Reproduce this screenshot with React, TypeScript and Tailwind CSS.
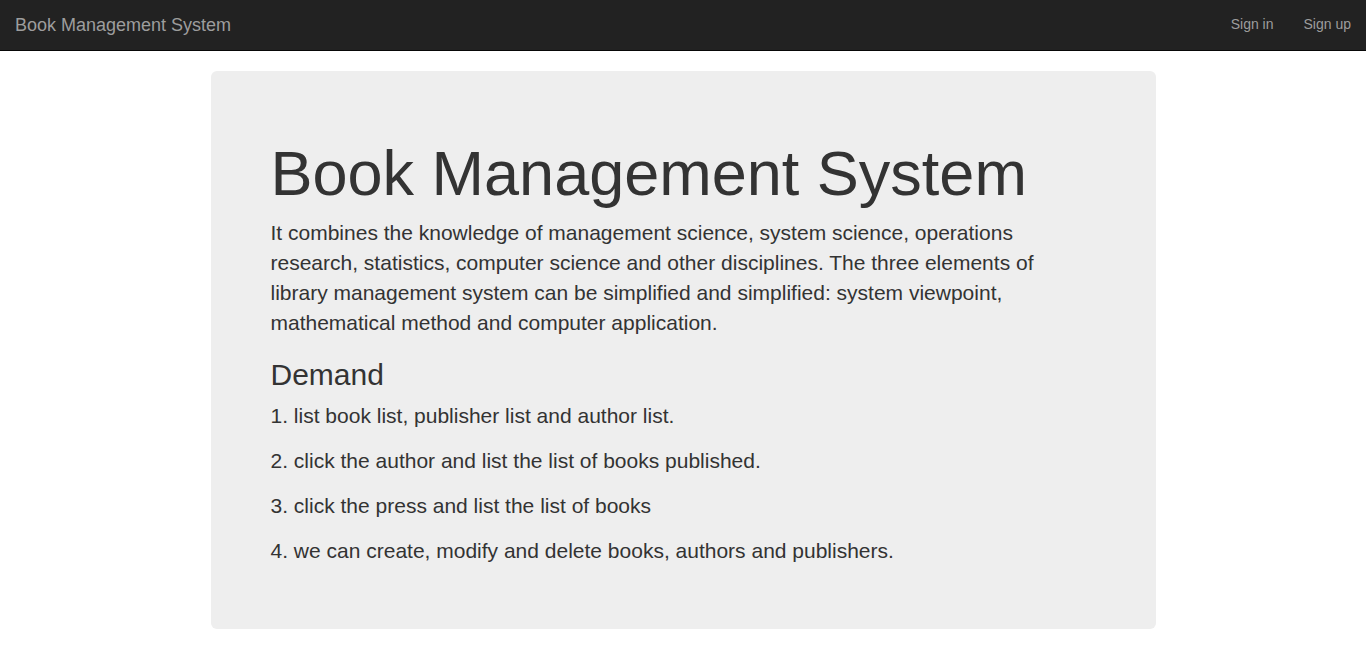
export default function App() {
  const demands = [
    "1. list book list, publisher list and author list.",
    "2. click the author and list the list of books published.",
    "3. click the press and list the list of books",
    "4. we can create, modify and delete books, authors and publishers.",
  ];

  return (
    <div className="min-h-screen bg-white text-[#333] font-['Liberation_Sans',Arial,sans-serif] text-[14px] leading-[1.42857]">
      {/* Navbar */}
      <nav className="h-[51px] bg-[#222] border-b border-[#080808] flex items-stretch justify-between">
        <a className="px-[15px] flex items-center text-[18px] leading-[20px] text-[#9d9d9d]">
          Book Management System
        </a>
        <ul className="flex">
          <li className="px-[15px] flex items-center text-[#9d9d9d]">Sign in</li>
          <li className="px-[15px] flex items-center text-[#9d9d9d]">Sign up</li>
        </ul>
      </nav>

      {/* Jumbotron */}
      <div className="w-[945px] mx-auto mt-[20px] bg-[#eee] rounded-[6px] px-[60px] py-[48px]">
        <h1 className="mt-[20px] mb-[10px] text-[63px] leading-[1.1] font-normal">
          Book Management System
        </h1>
        <p className="mb-[15px] text-[21px] leading-[30px] font-[200]">
          It combines the knowledge of management science, system science, operations research,
          statistics, computer science and other disciplines. The three elements of library
          management system can be simplified and simplified: system viewpoint, mathematical
          method and computer application.
        </p>
        <h2 className="mt-[20px] mb-[10px] text-[30px] leading-[1.1] font-normal">Demand</h2>
        {demands.map((d) => (
          <p key={d} className="mb-[15px] text-[21px] leading-[30px]">
            {d}
          </p>
        ))}
      </div>
    </div>
  );
}
